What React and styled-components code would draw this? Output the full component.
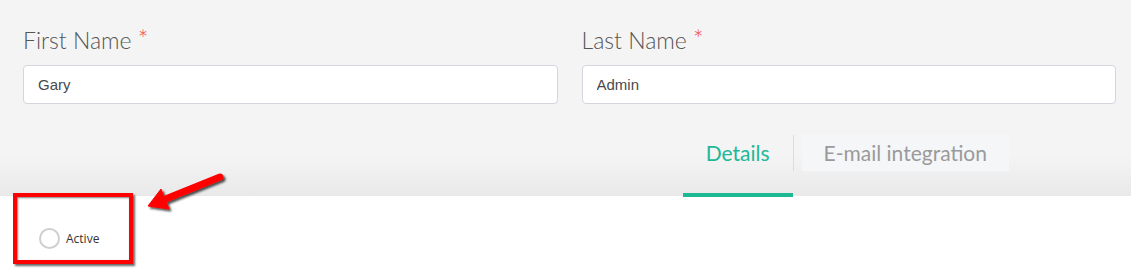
import React, { useState } from 'react';
import styled, { createGlobalStyle } from 'styled-components';

const GlobalStyle = createGlobalStyle`
  body {
    margin: 0;
    background: #fff;
    font-family: "Open Sans", "Liberation Sans", sans-serif;
  }
`;

const App = () => {
  const [active, setActive] = useState(false);

  return (
    <Page>
      <GlobalStyle />
      <Header>
        <FormRow>
          <Field>
            <Label>
              First Name <Required>*</Required>
            </Label>
            <Input type="text" defaultValue="Gary" />
          </Field>
          <Field>
            <Label>
              Last Name <Required>*</Required>
            </Label>
            <Input type="text" defaultValue="Admin" />
          </Field>
        </FormRow>
        <TabBar>
          <Tab selected>Details</Tab>
          <Divider />
          <Tab>E-mail integration</Tab>
        </TabBar>
      </Header>
      <Content>
        <RadioLabel onClick={() => setActive(!active)}>
          <RadioCircle checked={active} />
          Active
        </RadioLabel>
      </Content>

      {/* screenshot annotation */}
      <HighlightBox />
      <Arrow width="90" height="50" viewBox="140 165 90 50">
        <defs>
          <filter id="arrowShadow" x="-20%" y="-40%" width="140%" height="180%">
            <feDropShadow dx="2" dy="2" stdDeviation="1.2" floodColor="#000" floodOpacity="0.7" />
          </filter>
        </defs>
        <g filter="url(#arrowShadow)" fill="#f00" stroke="#f00">
          <line x1="220" y1="177" x2="163" y2="200" strokeWidth="7" strokeLinecap="round" />
          <polygon points="148,206 169,209 161,189" strokeWidth="1" strokeLinejoin="round" />
        </g>
      </Arrow>
    </Page>
  );
};

const Page = styled.div`
  position: relative;
  width: 1131px;
  min-height: 268px;
  background: #fff;
`;

const Header = styled.div`
  padding: 27px 15px 0 23px;
  background: linear-gradient(to bottom, #f4f4f4 0, #f4f4f4 155px, #e9e9e9 196px);
  height: 196px;
  box-sizing: border-box;
`;

const FormRow = styled.div`
  display: grid;
  grid-template-columns: 1fr 1fr;
  column-gap: 24px;
`;

const Field = styled.div`
  display: flex;
  flex-direction: column;
`;

const Label = styled.label`
  display: block;
  height: 27px;
  font-family: Lato, "Open Sans", sans-serif;
  font-weight: 300;
  font-size: 23px;
  line-height: 27px;
  color: #555;
  margin-bottom: 11px;
`;

const Required = styled.span`
  font-size: 25px;
  line-height: 0;
  color: #f44a4a;
`;

const Input = styled.input`
  height: 39px;
  box-sizing: border-box;
  border: 1px solid #d3d6dc;
  border-radius: 4px;
  background: #fff;
  padding: 0 14px;
  font-family: "Liberation Sans", Arial, sans-serif;
  font-size: 15px;
  color: #4a4a4a;
  outline: none;
`;

const TabBar = styled.div`
  display: flex;
  justify-content: flex-end;
  align-items: flex-start;
  margin-top: 30px;
  padding-right: 107px;
`;

const Tab = styled.div`
  font-family: Lato, "Open Sans", sans-serif;
  font-size: 21px;
  line-height: 37px;
  padding: 0 ${(p) => (p.selected ? '23px' : '22px')};
  color: ${(p) => (p.selected ? '#22b897' : '#9a9a9a')};
  background: ${(p) => (p.selected ? 'transparent' : '#f5f6f8')};
  height: ${(p) => (p.selected ? '63px' : '37px')};
  box-sizing: border-box;
  border-bottom: ${(p) => (p.selected ? '4px solid #1db894' : 'none')};
  cursor: pointer;
`;

const Divider = styled.div`
  width: 1px;
  height: 36px;
  margin: 1px 8px 0 0;
  background: #dcdcdc;
`;

const Content = styled.div`
  padding: 32px 0 0 39px;
`;

const RadioLabel = styled.label`
  display: inline-flex;
  align-items: center;
  gap: 6px;
  font-family: "Open Sans", sans-serif;
  font-size: 12px;
  color: #333;
  cursor: pointer;
`;

const RadioCircle = styled.span`
  width: 21px;
  height: 21px;
  box-sizing: border-box;
  border-radius: 50%;
  border: 2px solid #cfcfcf;
  background: ${(p) => (p.checked ? '#22b897' : '#fff')};
`;

const HighlightBox = styled.div`
  position: absolute;
  left: 13px;
  top: 193px;
  width: 120px;
  height: 71px;
  box-sizing: border-box;
  border: 4px solid #f00;
  box-shadow: 2px 2px 2px rgba(0, 0, 0, 0.6), inset 1px 1px 2px rgba(0, 0, 0, 0.5);
  pointer-events: none;
`;

const Arrow = styled.svg`
  position: absolute;
  left: 140px;
  top: 165px;
  overflow: visible;
  pointer-events: none;
`;

export default App;
